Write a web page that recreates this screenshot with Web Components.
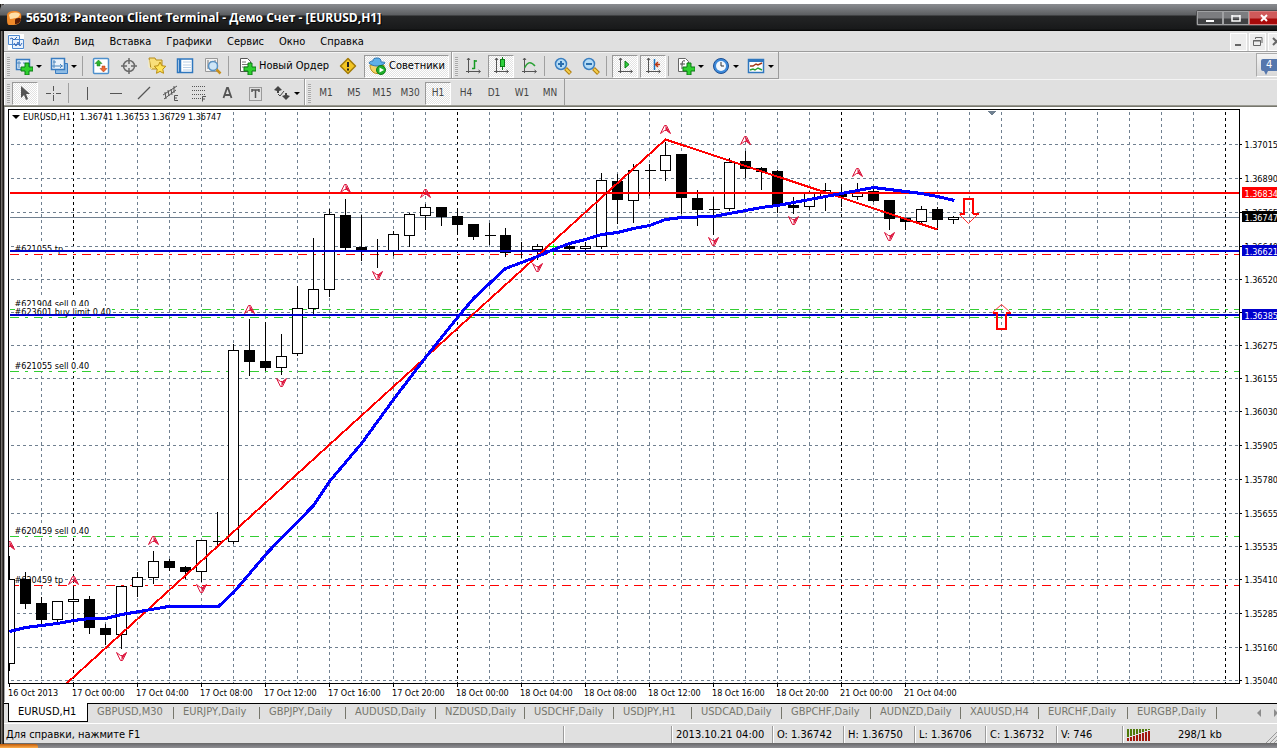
<!DOCTYPE html>
<html lang="ru">
<head>
<meta charset="utf-8">
<title>Panteon Client Terminal</title>
<style>
  body { margin: 0; background: #fff; font: 11px/14px "DejaVu Sans Condensed", Tahoma, sans-serif; color: #000; }
</style>
</head>
<body>
<terminal-window>
  <title-bar slot="title">565018: Panteon Client Terminal - Демо Счет - [EURUSD,H1]</title-bar>
  <menu-bar slot="menu" items="Файл,Вид,Вставка,Графики,Сервис,Окно,Справка"></menu-bar>
  <tool-dock slot="tools">
    <tool-bar ruled>
      <tool-button icon="newchart" label="Новый график" menu></tool-button>
      <tool-button icon="profiles" label="Профили" menu></tool-button>
      <tool-separator></tool-separator>
      <tool-button icon="market" label="Обзор рынка"></tool-button>
      <tool-button icon="datawin" label="Окно данных"></tool-button>
      <tool-button icon="navigator" label="Навигатор"></tool-button>
      <tool-button icon="terminal" label="Терминал"></tool-button>
      <tool-button icon="tester" label="Тестер стратегий"></tool-button>
      <tool-separator></tool-separator>
      <tool-button icon="order" label="Новый Ордер" wide>Новый Ордер</tool-button>
      <tool-button icon="warning" label="MetaEditor"></tool-button>
      <tool-button icon="experts" label="Советники" wide pressed>Советники</tool-button>
    </tool-bar>
    <tool-bar ruled>
      <tool-button icon="bars" label="Бары"></tool-button>
      <tool-button icon="candles" label="Свечи" pressed></tool-button>
      <tool-button icon="line" label="Линия"></tool-button>
      <tool-separator></tool-separator>
      <tool-button icon="zoomin" label="Увеличить"></tool-button>
      <tool-button icon="zoomout" label="Уменьшить"></tool-button>
      <tool-separator></tool-separator>
      <tool-button icon="scroll" label="Автопрокрутка" pressed></tool-button>
      <tool-button icon="shift" label="Сдвиг графика" pressed></tool-button>
      <tool-separator></tool-separator>
      <tool-button icon="indicator" label="Индикаторы" menu></tool-button>
      <tool-button icon="clock" label="Периоды" menu></tool-button>
      <tool-button icon="template" label="Шаблоны" menu></tool-button>
    </tool-bar>
    <message-counter slot="end" count="4"></message-counter>
  </tool-dock>
  <tool-dock slot="tools">
    <tool-bar>
      <tool-button icon="cursor" label="Курсор" pressed></tool-button>
      <tool-button icon="cross" label="Перекрестие"></tool-button>
      <tool-separator></tool-separator>
      <tool-button icon="vline" label="Вертикальная линия"></tool-button>
      <tool-button icon="hline" label="Горизонтальная линия"></tool-button>
      <tool-button icon="trend" label="Трендовая линия"></tool-button>
      <tool-button icon="channel" label="Канал"></tool-button>
      <tool-button icon="fibo" label="Фибоначчи"></tool-button>
      <tool-button icon="text" label="Текст"></tool-button>
      <tool-button icon="label" label="Метка"></tool-button>
      <tool-button icon="arrows" label="Стрелки" menu></tool-button>
    </tool-bar>
    <tool-bar>
      <tool-button label="M1">M1</tool-button>
      <tool-button label="M5">M5</tool-button>
      <tool-button label="M15">M15</tool-button>
      <tool-button label="M30">M30</tool-button>
      <tool-button label="H1" pressed>H1</tool-button>
      <tool-button label="H4">H4</tool-button>
      <tool-button label="D1">D1</tool-button>
      <tool-button label="W1">W1</tool-button>
      <tool-button label="MN">MN</tool-button>
    </tool-bar>
  </tool-dock>
  <price-chart slot="chart"></price-chart>
  <chart-tabs slot="tabs" items="EURUSD,H1|GBPUSD,M30|EURJPY,Daily|GBPJPY,Daily|AUDUSD,Daily|NZDUSD,Daily|USDCHF,Daily|USDJPY,H1|USDCAD,Daily|GBPCHF,Daily|AUDNZD,Daily|XAUUSD,H4|EURCHF,Daily|EURGBP,Daily"></chart-tabs>
  <status-bar slot="status"></status-bar>
</terminal-window>

<script>
const define = (name, html, setup) => {
  const template = document.createElement('template');
  template.innerHTML = html;
  customElements.define(name, class extends HTMLElement {
    constructor() {
      super();
      this.attachShadow({ mode: 'open' }).append(template.content.cloneNode(true));
    }
    connectedCallback() {
      if (setup && !this.ready) { this.ready = true; setup(this, this.shadowRoot); }
    }
  });
};

const axes = '<path d="M4.5 1v15M2 14.500h14M3 3l1.500-2L6 3M14.500 13l2 1.500-2 1.500" fill="none" stroke="#555"/>';
const plus = '<path d="M9 8h4v4h4v4h-4v4h-4v-4H5v-4h4z" transform="translate(1 -2)" fill="#2fd02f" stroke="#0a7a14"/>';
const glass = '<circle cx="7" cy="7" r="5.500" fill="#b5dcf6" stroke="#3b7fc0" stroke-width="1.500"/><path d="M11.500 11.500l5 5" stroke="#b07d10" stroke-width="4"/><path d="M12 12l4 4" stroke="#f5cf4e" stroke-width="2"/>';
const ICONS = {
  newchart: '<path d="M1.500 2.500h13v10h-13z" fill="#e8f2fb" stroke="#3a7cc0" stroke-width="1.500"/><path d="M4 4v7M2 6h4M9 5v2" stroke="#4a86be"/>' + plus,
  profiles: '<path d="M5.500 6.500h12v10h-12z" fill="#8dbbe4" stroke="#3a7cc0"/><path d="M1.500 1.500h13v11h-13z" fill="#eaf3fb" stroke="#3a7cc0" stroke-width="1.500"/><path d="M4 3v8M2 9h11M10 7l2 2-2 2M3 5h3" fill="none" stroke="#4a86be"/>',
  market: '<rect x="1.500" y="1.500" width="15" height="15" rx="1" fill="#fff" stroke="#4e90cc" stroke-width="1.500"/><path d="M6.500 3L10 6.500H8V9H5V6.500H3z" fill="#2db52d" stroke="#187818" stroke-width=".5"/><path d="M11.500 15L15 11.500h-2V9h-3v2.500H8z" fill="#f06a32" stroke="#a83a10" stroke-width=".5"/>',
  datawin: '<circle cx="9" cy="9" r="5.500" fill="none" stroke="#6a6a6a" stroke-width="1.500"/><path d="M9 1v6M9 11v6M1 9h6M11 9h6" stroke="#6a6a6a" stroke-width="1.500"/>',
  navigator: '<path d="M1 1h6l1 2h6v9H3z" fill="#f9df7a" stroke="#b58c1a"/><path d="M1 3v7l3 2" stroke="#fff2b8" fill="none"/><path d="M12 5l1.800 3.700 4 .6-3 2.900.7 4.100L12 14.400l-3.500 1.900.7-4.100-3-2.900 4-.6z" fill="#ffe45a" stroke="#b98d10"/>',
  terminal: '<rect x="1.500" y="2" width="15" height="13.500" fill="#fff" stroke="#2f77be" stroke-width="1.500"/><path d="M4 2v13" stroke="#2f77be" stroke-width="2.500"/><path d="M7 5h8M7 8h8M7 10.500h8M7 13h8" stroke="#b9cfe6"/>',
  tester: '<path d="M1.500 1.500h12v13h-12z" fill="#f2f2f2" stroke="#999"/><path d="M4 3v9M7 4v6M11 3v4" stroke="#777"/><circle cx="9" cy="9" r="4.500" fill="#cfe6f7" stroke="#5b93c4" stroke-width="1.500"/><path d="M12.500 12.500l4 4" stroke="#c78f1c" stroke-width="2.500"/>',
  order: '<path d="M2.500 1.500h7l3 3v10h-10z" fill="#fff" stroke="#555"/><path d="M4 5h4M4 7.500h7M4 10h6" stroke="#777"/>' + plus,
  warning: '<path d="M9 1.500L16.500 9 9 16.500 1.500 9z" fill="#f3c623" stroke="#a37b08" stroke-width="1.500" stroke-linejoin="round"/><path d="M9 5v5M9 11.500v2" stroke="#222" stroke-width="2"/>',
  experts: '<path d="M2 8c0 5 3 8.500 7 8.500s7-3 7-8.500z" fill="#f4d264" stroke="#b58c1a"/><path d="M1 6c2 2 5 3 8 3s6-1 8-3c0-1-2-1-4-1 0-3-1-4-4-4S5 2 5 4C3 4 1 5 1 6z" fill="#5fb0e8" stroke="#2f77b4"/><circle cx="13" cy="13" r="4.500" fill="#1faf2a" stroke="#0b7c16"/><path d="M11.500 10.500v5L16 13z" fill="#fff"/>',
  bars: axes + '<path d="M10.500 3v9M8 11.500h2.500M10.500 4h2.500" stroke="#169a22" stroke-width="1.500" fill="none"/>',
  candles: axes + '<path d="M10.500 0v13" stroke="#0c7c16"/><rect x="8.500" y="2.500" width="4" height="7" fill="#2ed13c" stroke="#0c7c16"/>',
  line: axes + '<path d="M4.500 11C7 6 10 3 15 9" fill="none" stroke="#2ba236" stroke-width="1.500"/>',
  zoomin: glass + '<path d="M7 4v6M4 7h6" stroke="#2b6fae" stroke-width="2"/>',
  zoomout: glass + '<path d="M4 7h6" stroke="#2b6fae" stroke-width="2"/>',
  scroll: axes + '<path d="M9 4v7l4-3.500z" fill="#2ed13c" stroke="#0c7c16"/>',
  shift: axes + '<path d="M10.500 2v11" stroke="#1b76c0" stroke-width="1.500"/><path d="M12 7.500h4M14 5l-2.500 2.500L14 10" fill="none" stroke="#b93812" stroke-width="1.500"/>',
  indicator: '<path d="M1.500 1.500h7l3 3v10h-10z" fill="#fff" stroke="#666"/><path d="M8 4c-3-1-3 1-3 8M3 7h5" fill="none" stroke="#444"/>' + plus,
  clock: '<circle cx="9" cy="9" r="7.500" fill="#3d8ada" stroke="#1d4f93"/><circle cx="9" cy="9" r="5" fill="#f3f8fd"/><path d="M9 5v4h3" fill="none" stroke="#333"/>',
  template: '<rect x="1.500" y="2.500" width="15" height="13" fill="#fff" stroke="#2f77be" stroke-width="1.500"/><path d="M1 3.500h16" stroke="#2f77be" stroke-width="3"/><path d="M3 9h3l3-2 2 1 4-2" fill="none" stroke="#a33816" stroke-width="1.500"/><path d="M3 13l3-1 2 1 3-2 4 2" fill="none" stroke="#27a02f" stroke-width="1.500"/>',
  cursor: '<path d="M5 2v12l3-3 2 5 2-1-2-5h4z" fill="#555"/>',
  cross: '<path d="M9.500 2v5M9.500 11v6M2 9.500h5M12 9.500h5M9 9.500h1" stroke="#555"/>',
  vline: '<path d="M9.500 3v13" stroke="#555"/>',
  hline: '<path d="M4 9.500h12" stroke="#555"/>',
  trend: '<path d="M4 15L16 3" stroke="#555" stroke-width="1.200"/>',
  channel: '<path d="M1 11L15 2M2 15L14 6M3 8l1 7M6 6l1 6M9 5l1 6M12 2v7" stroke="#555" fill="none"/><path d="M16 11.500h-3.500v5H16M12 14h3" fill="none" stroke="#555"/>',
  fibo: '<path d="M2 2.500h14M2 6.500h14M2 10.500h14M2 14.500h9" stroke="#555" stroke-dasharray="1 1"/><path d="M16 12.500h-3.500v5M12 15h3" fill="none" stroke="#555"/>',
  text: '<path d="M5.500 14L9 4h1l3.500 10M7 11h5" fill="none" stroke="#555" stroke-width="1.800"/>',
  label: '<rect x="3.500" y="3.500" width="12" height="13" fill="none" stroke="#555" stroke-dasharray="1 1"/><path d="M6 6h7M9.500 6v8M6 5v3M13 5v3" stroke="#555" stroke-width="1.500"/>',
  arrows: '<path d="M5 2l4 4-3 1v2H4V7L1 6z" fill="#444"/><path d="M13 16l-4-4 3-1V9h2v2l3 1z" fill="#444"/><path d="M5 10l2 2 4-5" fill="none" stroke="#444"/>'
};

define('terminal-window', `
  <style>
    :host { display: block; margin: 4px 11px 0 0; }
    .frame { display: flex; flex-direction: column; padding-left: 4px;
      background: linear-gradient(90deg, #1d1b19 1px, #75716d 1px 2px, #45413e 2px 3px, #1d1b19 3px 4px, #e0e0e0 4px); }
    .tools { border-bottom: 1px solid #9a9a92; }
    .client { border-top: 1px solid #76766c; background: #fff; }
    .taskbar { height: 4px; display: flex; background: linear-gradient(#6e6e72, #909094); }
    .start { width: 38px; border-radius: 0 3px 0 0; background: linear-gradient(#c05a08, #ffb050); }
  </style>
  <div class="frame">
    <slot name="title"></slot>
    <slot name="menu"></slot>
    <div class="tools"><slot name="tools"></slot></div>
    <div class="client"><slot name="chart"></slot></div>
    <slot name="tabs"></slot>
    <slot name="status"></slot>
  </div>
  <div class="taskbar"><div class="start"></div></div>`);

define('title-bar', `
  <style>
    :host { display: flex; align-items: center; height: 27px; margin-left: -4px; padding-left: 6px;
      box-sizing: border-box; color: #fff; border-radius: 6px 0 0 0;
      background: linear-gradient(#8a8c90 0, #5c5e61 11px, #242526 12px, #18191a 25px, #000 27px); }
    svg { width: 16px; height: 16px; margin-right: 4px; }
    h1 { flex: 1; margin: 0; font: bold 12px/16px "Open Sans", "Noto Sans", sans-serif; white-space: nowrap; text-shadow: 1px 1px 0 #000; }
    .buttons { display: flex; border: 1px solid #4a4b4d; border-right: 0; border-radius: 3px 0 0 3px; }
    button { width: 26px; height: 14px; padding: 0; display: grid; place-items: center;
      border: 1px solid #a0a1a3; background: linear-gradient(#7c7d80 6px, #404143 7px); }
    button svg { width: 10px; height: 8px; margin: 0; fill: none; stroke: #fff; stroke-width: 2; }
    .close { width: 28px; border-color: #d87a7a; border-right: 0; background: linear-gradient(#cf5a5a 6px, #a80a0a 7px); }
  </style>
  <svg viewBox="0 0 16 16"><path d="M1 6c0-4 3-5 8-5 6 0 7 4 6 8-1 6-5 6-12 6-2 0-2-4-2-9z" fill="#f08a2a"/><path d="M3 5c2-3 8-3 11-1-1 4-3 4-10 5z" fill="#ffe0a8"/><path d="M9 14V10c0-2 5-3 6-1-1 4-3 5-6 5z" fill="#5a1d05"/></svg>
  <h1><slot></slot></h1>
  <div class="buttons">
    <button aria-label="Свернуть"><svg viewBox="0 0 10 8"><path d="M1 7h8"/></svg></button>
    <button aria-label="Развернуть"><svg viewBox="0 0 10 8"><path d="M1 2h8M1 1v6h8V1" stroke-width="1.500"/></svg></button>
    <button class="close" aria-label="Закрыть"><svg viewBox="0 0 10 8"><path d="M2 1l6 6M8 1L2 7"/></svg></button>
  </div>`);

define('menu-bar', `
  <style>
    :host { display: flex; align-items: center; height: 21px; padding: 1px 0 0 4px; overflow: hidden; box-sizing: border-box;
      border-bottom: 1px solid #9c9c9c; }
    nav { display: flex; flex: 1; gap: 15px; margin-left: 8px; }
    a { color: #000; text-decoration: none; }
    .icon { width: 16px; height: 16px; }
    .windows { display: flex; gap: 2px; margin-right: -8px; }
    button { width: 17px; height: 18px; padding: 0; border: 1px solid #fff; background: #ededed; display: grid; place-items: center; }
    button svg { width: 11px; height: 11px; fill: none; stroke: #666; }
  </style>
  <svg class="icon" viewBox="0 0 16 16"><rect width="16" height="16" fill="#fff"/><path d="M.500 1.500h11v9H.500zM4.500 5.500h11v9h-11z" fill="#e9f2fc" stroke="#4d88cf"/><path d="M2 5l2-1 2 2 3-3M6 9l2 3 2-4 2 4 2-3" fill="none" stroke="#3567b8"/></svg>
  <nav></nav>
  <div class="windows">
    <button aria-label="Свернуть окно"><svg viewBox="0 0 11 11"><path d="M2 9h6" stroke-width="2"/></svg></button>
    <button aria-label="Восстановить окно"><svg viewBox="0 0 11 11"><path d="M1.500 4.500h7v5h-7zM1 5h8M3.500 3V1.500h6.500V7"/></svg></button>
    <button aria-label="Закрыть окно"><svg viewBox="0 0 11 11"><path d="M2 2l7 7M9 2L2 9" stroke-width="2"/></svg></button>
  </div>`, (host, root) => {
  root.querySelector('nav').innerHTML = host.getAttribute('items').split(',')
    .map(t => `<a href="#">${t}</a>`).join('');
});

define('tool-dock', `
  <style>
    :host { display: flex; align-items: flex-start; box-shadow: inset 0 1px #f4f4f4; }
    .end { margin-left: auto; padding-top: 1px; }
  </style>
  <slot></slot><div class="end"><slot name="end"></slot></div>`);

define('tool-bar', `
  <style>
    :host { display: flex; align-items: center; height: 26px; box-sizing: border-box; padding: 2px 0 0 7px; position: relative;
      border-right: 1px solid #9c9c9c; box-shadow: inset 1px 0 #fff; }
    :host([ruled]) { height: 27px; border-bottom: 1px solid #9c9c9c; }
    .grip { position: absolute; left: 3px; top: 5px; width: 3px; height: 19px;
      background: repeating-linear-gradient(#a8a8a8 0 1px, #e8e8e8 1px 2px); }
  </style>
  <span class="grip"></span><slot></slot>`);

define('tool-separator', `
  <style>
    :host { display: block; width: 1px; height: 20px; margin: 0 4px 0 1px; background: #a0a0a0; }
  </style>`);

define('tool-button', `
  <style>
    :host { display: block; }
    button { display: flex; align-items: center; justify-content: center; gap: 3px; width: 28px; height: 23px; padding: 0;
      border: 0; background: none; font: inherit; font-size: 10px; color: #444; white-space: nowrap; }
    svg { width: 18px; height: 18px; flex: none; }
    :host([menu]) button { width: 35px; }
    :host([menu]) button::after { content: ""; border: 3px solid transparent; border-top-color: #000; border-bottom: 0; }
    :host([wide]) button { width: auto; padding: 0 5px; font-size: 11px; color: #000; }
    :host([pressed]) button { width: 26px; margin: 0 1px; border: 1px solid; border-color: #999 #fff #fff #999;
      background: repeating-conic-gradient(#fff 0 25%, #e2e2e2 0 50%) 0 0 / 2px 2px; }
    :host([pressed][wide]) button { width: auto; padding: 0 3px; margin: 0 2px; }
  </style>
  <button><slot></slot></button>`, (host, root) => {
  const button = root.querySelector('button');
  const icon = ICONS[host.getAttribute('icon')];
  button.setAttribute('aria-label', host.getAttribute('label'));
  button.setAttribute('aria-pressed', host.hasAttribute('pressed'));
  if (icon) button.insertAdjacentHTML('afterbegin', `<svg viewBox="0 0 18 18">${icon}</svg>`);
});

define('message-counter', `
  <style>
    :host { display: block; }
    button { width: 21px; height: 24px; padding: 3px 0 0 4px; border: 1px solid #aaa; border-right: 0; border-bottom-color: #fff; display: block;
      background: linear-gradient(#f4f4f4, #d8d8d8); font: inherit; text-align: left; }
    span { display: block; height: 12px; line-height: 12px; padding-left: 5px; background: #5577ad; color: #fff; border-radius: 2px 0 0 2px; }
    i { display: block; width: 0; margin-left: 3px; border: 2px solid transparent; border-top: 4px solid #5577ad; border-bottom: 0; }
  </style>
  <button aria-label="Сообщения"><span></span><i></i></button>`, (host, root) => {
  root.querySelector('span').textContent = host.getAttribute('count');
});

/* Candles: [high, body top, body bottom, low, kind]; h = hollow, f = filled, d = doji, g = green doji. */
const CANDLES = [
  [555,579,663,670,'h'],[571,579,603,608,'f'],[596,603,619,623,'f'],[601,601,619,622,'h'],[588,599,601,620,'h'],
  [595,599,627,633,'f'],[623,628,634,644,'f'],[586,586,634,648,'h'],[571,577,586,596,'h'],[550,561,577,583,'h'],
  [558,561,567,570,'f'],[565,567,571,578,'f'],[539,540,571,581,'h'],[511,541,541,547,'d'],[343,350,541,543,'h'],
  [318,350,361,375,'f'],[321,361,367,370,'f'],[333,356,367,374,'h'],[285,308,353,355,'h'],[237,289,308,313,'h'],
  [208,214,289,296,'h'],[198,215,247,250,'f'],[214,247,250,260,'f'],[238,250,250,267,'d'],[230,234,250,255,'h'],
  [212,214,235,246,'h'],[203,207,215,229,'h'],[206,207,216,225,'f'],[209,216,224,231,'f'],[224,224,236,239,'f'],
  [222,235,235,244,'d'],[227,235,252,256,'f'],[241,250,250,257,'d'],[243,246,249,259,'h'],[243,246,246,254,'g'],
  [244,246,248,250,'f'],[241,246,248,253,'h'],[172,180,246,248,'h'],[173,181,199,223,'f'],[163,170,200,222,'h'],
  [163,170,170,195,'d'],[141,155,170,180,'h'],[154,154,197,213,'f'],[189,198,209,225,'f'],[196,209,209,234,'d'],
  [157,162,208,210,'h'],[150,161,168,177,'f'],[166,168,171,189,'f'],[169,171,204,212,'f'],[196,205,207,213,'f'],
  [190,193,206,209,'h'],[182,190,196,210,'h'],[183,193,196,206,'f'],[182,193,196,199,'h'],[188,191,200,201,'f'],
  [200,200,218,229,'f'],[217,218,221,229,'f'],[205,209,221,224,'h'],[206,209,219,229,'f'],[215,217,219,223,'h']
];
const GRID = [[144,'1.37015'],[178,'1.36890'],[212,'1.36765'],[246,'1.36640'],[279,'1.36520'],[312,'1.36395'],[345,'1.36275'],
  [378,'1.36155'],[411,'1.36030'],[445,'1.35905'],[479,'1.35780'],[513,'1.35655'],[546,'1.35535'],[579,'1.35410'],
  [613,'1.35285'],[647,'1.35160'],[680,'1.35040']];
const TIMES = ['16 Oct 2013','17 Oct 00:00','17 Oct 04:00','17 Oct 08:00','17 Oct 12:00','17 Oct 16:00','17 Oct 20:00',
  '18 Oct 00:00','18 Oct 04:00','18 Oct 08:00','18 Oct 12:00','18 Oct 16:00','18 Oct 20:00','21 Oct 00:00','21 Oct 04:00'];
const ORDERS = [[254,'#621055 tp',48,'#f00'],[309,'#621904 sell 0.40',74,'#32cd32'],[317,'#623601 buy limit 0.40',97,'#32cd32'],
  [371,'#621055 sell 0.40',74,'#32cd32'],[536,'#620459 sell 0.40',74,'#32cd32'],[585,'#620459 tp',48,'#f00']];
const AVERAGE = '9,631 25,627 41,625 57,623 73,620 89,618 105,618 121,614 145,610 168,606 218,606 233,592 267,552 313,505 329,481 361,443 393,399 425,357 457,317 473,298 505,268 537,256 553,249 569,243 585,239 601,234 617,232 633,228 649,225 665,219 681,217 713,216 745,210 761,207 777,205 793,202 841,193 873,187 905,191 921,193 937,196 954,200';
const UP = [[9,545],[73,580],[153,540],[249,309],[345,188],[425,193],[665,129],[745,140],[857,172]];
const DOWN = [[121,656],[201,588],[281,382],[377,275],[537,267],[713,241],[793,220],[889,236]];

define('price-chart', `
  <style>
    :host { display: grid; grid-template-columns: 1fr 37px; padding: 2px 0 0 4px; box-shadow: inset 1px 0 #a8a8a8;
      font-size: 9px; line-height: 12px; }
    .plot { position: relative; border: 1px solid #000; height: 573px; overflow: hidden; }
    svg { display: block; width: 100%; }
    .plot svg { height: 573px; }
    .prices { height: 575px; }
    .times { grid-column: 1 / 3; height: 18px; }
    .legend { position: absolute; left: 3px; top: 1px; display: flex; align-items: center; gap: 3px; }
    .legend i { border: 4px solid transparent; border-top-color: #000; border-bottom: 0; }
    .legend span { margin-right: 6px; }
  </style>
  <div class="plot"><svg role="img" aria-label="EURUSD,H1"></svg>
    <div class="legend"><i></i><span>EURUSD,H1</span><span>1.36741 1.36753 1.36729 1.36747</span></div></div>
  <svg class="prices"></svg>
  <svg class="times"></svg>`, (host, root) => {
  const X0 = 9, Y0 = 110, FAR = 4000;
  let s = '';
  for (let x = 41; x < FAR; x += 32) {
    const day = (x - 73) % 384 === 0;
    s += `<path d="M${x} 111V700" stroke="${day ? '#000' : '#708090'}" stroke-dasharray="3"/>`;
  }
  for (const [y] of GRID) s += `<path d="M10 ${y}H${FAR}" stroke="#708090" stroke-dasharray="3"/>`;
  s += `<path d="M9 217H${FAR}" stroke="#708090"/>`;
  for (const [y, , , c] of ORDERS) s += `<path d="M9 ${y}H${FAR}" stroke="${c}" stroke-dasharray="9 6 3 6"/>`;
  for (const [y, t, w] of ORDERS)
    s += `<rect x="14" y="${y - 12}" width="${w}" height="11" fill="#fff"/><text x="14" y="${y - 3}">${t}</text>`;
  CANDLES.forEach(([hi, top, bottom, lo, kind], i) => {
    const x = 9 + 16 * i, c = kind === 'g' ? '#0f0' : '#000';
    s += `<path d="M${x} ${hi}V${lo}" stroke="${c}"/>`;
    s += kind === 'h' || kind === 'f'
      ? `<rect x="${x - 5}" y="${top}" width="10" height="${bottom - top}" stroke="#000" fill="${kind === 'h' ? '#fff' : '#000'}"/>`
      : `<path d="M${x - 5} ${top}H${x + 6}" stroke="${c}"/>`;
  });
  s += `<g stroke-width="2" fill="none"><path d="M9 192.500H${FAR}" stroke="#f00"/><path d="M9 250.500H${FAR}M9 314.500H${FAR}" stroke="#0000cd"/>
    <path d="M66 683L665 139 937 229" stroke="#f00"/></g>`;
  s += `<polyline points="${AVERAGE}" fill="none" stroke="#00f" stroke-width="3"/>`;
  const fractal = (x, y, f) => `<g transform="translate(${x} ${y}) scale(1 ${f})" shape-rendering="auto"><path d="M-5 4L-1-4H1L5 4 1 1H-1z" fill="none" stroke="#dc143c"/><path d="M0-4L5 4 1 1H0z" fill="#dc143c"/></g>`;
  for (const [x, y] of UP) s += fractal(x, y, 1);
  for (const [x, y] of DOWN) s += fractal(x, y, -1);
  s += `<path d="M963.500 213.500V198.500H972.500V213.500" fill="none" stroke="#f00" stroke-width="2"/><path d="M959 213.500H964M972 213.500H978" stroke="#f00" stroke-width="2"/><path d="M959 214L968 223 977 214" fill="none" stroke="#f33" shape-rendering="auto"/>
    <path d="M996.500 313.500V328.500H1005.500V313.500M992 312.500H997M1005 312.500H1010" fill="none" stroke="#f00" stroke-width="2"/><path d="M992 312L1001 304 1010 312" fill="none" stroke="#f33" shape-rendering="auto"/>
    <path d="M987 110H996L991.500 115z" fill="#708090"/>`;
  root.querySelector('.plot svg').innerHTML = `<g transform="translate(${0.5 - X0} ${0.5 - Y0})" shape-rendering="crispEdges">${s}</g>`;

  let p = '';
  for (const [y, t] of GRID) p += `<path d="M0 ${y}H2" stroke="#000"/><text x="5" y="${y + 3}">${t}</text>`;
  for (const [y, t, c] of [[192,'1.36834','#f00'],[216,'1.36747','#000'],[250,'1.36621','#0000cd'],[314,'1.36385','#0000cd']])
    p += `<rect x="3" y="${y - 5}" width="35" height="10" fill="${c}" stroke="${c}"/><text x="5" y="${y + 4}" fill="#fff">${t}</text>`;
  root.querySelector('.prices').innerHTML = `<g transform="translate(-.5 -108.500)" shape-rendering="crispEdges">${p}</g>`;

  root.querySelector('.times').innerHTML = TIMES.map((t, i) => {
    const x = 1 + 64 * i;
    return `<rect x="${x}" width="1" height="3"/><text x="${i ? x - 1 : 0}" y="12">${t}</text>`;
  }).join('');
});

define('chart-tabs', `
  <style>
    :host { display: flex; height: 22px; padding-left: 4px; box-sizing: border-box; overflow: hidden; border-bottom: 1px solid #fff;
      background: linear-gradient(#fff 1px, #000 1px 2px, #e0e0e0 2px); }
    div { display: flex; flex: 1; align-items: flex-start; }
    button { width: 89px; height: 20px; padding: 0 0 0 9px; margin: 0; border: 0; background: none; font: inherit; text-align: left;
      white-space: nowrap; color: #76766c; position: relative; }
    .short { width: 78px; }
    .medium { width: 86px; }
    .long { width: 90px; }
    button:not(.active)::after { content: ""; position: absolute; right: 0; top: 5px; width: 1px; height: 12px; background: #76766c; }
    .active { width: 80px; color: #000; background: #fff; border: 1px solid #000; border-top: 0; margin-top: 1px; height: 19px; }
    svg { width: 20px; height: 8px; margin-top: 7px; fill: #8c8c8c; }
  </style>
  <div role="tablist"></div>
  <svg viewBox="0 0 20 8"><path d="M4 0v8L0 4zM17 0v8l4-4z"/></svg>`, (host, root) => {
  const size = t => /,H/.test(t) ? 'short' : /JPY|M30/.test(t) ? 'medium' : /AUD|CAD/.test(t) ? 'long' : '';
  root.querySelector('div').innerHTML = host.getAttribute('items').split('|')
    .map((t, i) => `<button role="tab" aria-selected="${!i}" class="${i ? size(t) : 'active'}">${t}</button>`).join('');
});

define('status-bar', `
  <style>
    :host { display: flex; height: 20px; padding: 2px 0 0 2px; box-sizing: border-box; border-bottom: 1px solid #6c6c6c; }
    .cell { display: flex; align-items: center; width: 71px; padding: 1px 0 0 4px; border-left: 1px solid #9c9c9c; box-shadow: inset 1px 0 #fff;
      box-sizing: border-box; white-space: nowrap; }
    .help { flex: 1; border: 0; padding-left: 0; box-shadow: none; }
    .gap { width: 108px; } .date { width: 101px; } .volume { width: 66px; } .link { width: 155px; gap: 26px; }
    .bars { width: 25px; height: 12px; }
    .size { width: 13px; height: 13px; align-self: flex-end; margin-left: auto; }
  </style>
  <span class="cell help">Для справки, нажмите F1</span>
  <span class="cell gap"></span>
  <span class="cell date">2013.10.21 04:00</span>
  <span class="cell">O: 1.36742</span>
  <span class="cell">H: 1.36750</span>
  <span class="cell">L: 1.36706</span>
  <span class="cell">C: 1.36732</span>
  <span class="cell volume">V: 746</span>
  <span class="cell link"><svg class="bars"></svg>298/1 kb<svg class="size" viewBox="0 0 13 13"><path d="M2 13L13 2M6 13l7-7M10 13l3-3" stroke="#999"/></svg></span>`,
(host, root) => {
  root.querySelector('.bars').innerHTML = [...Array(8)].map((_, i) =>
    `<rect x="${i * 3}" width="2" height="${8 - i}" fill="#4f7a0a"/><rect x="${i * 3}" y="${9 - i}" width="2" height="${3 + i}" fill="#a3180c"/>`).join('');
});
</script>
</body>
</html>
